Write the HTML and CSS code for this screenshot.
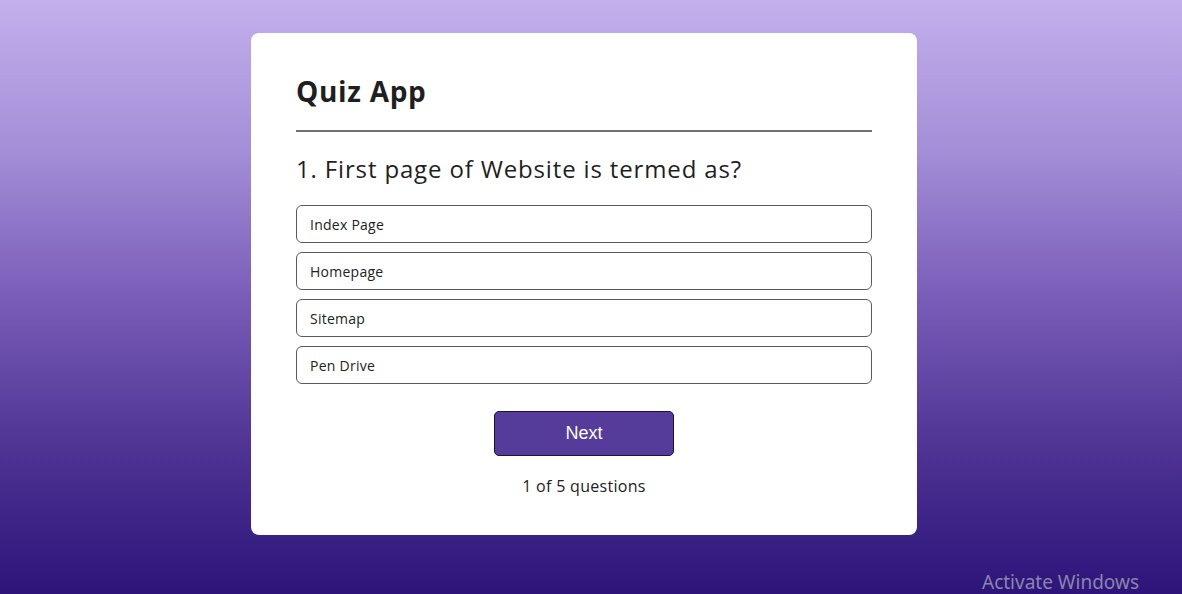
FILE: index.html
```html
<!DOCTYPE html>
<html lang="en">
<head>
<meta charset="utf-8">
<title>Quiz App</title>
<link rel="stylesheet" href="styles.css">
</head>
<body>
<main class="page">
  <section class="card">
    <h1 class="title">Quiz App</h1>
    <hr class="divider">
    <h2 class="question">1. First page of Website is termed as?</h2>
    <ul class="options">
      <li class="option">Index Page</li>
      <li class="option">Homepage</li>
      <li class="option">Sitemap</li>
      <li class="option">Pen Drive</li>
    </ul>
    <div class="actions">
      <button class="next-btn" type="button">Next</button>
      <p class="counter">1 of 5 questions</p>
    </div>
  </section>
</main>
<div class="watermark">Activate Windows</div>
</body>
</html>
```
FILE: styles.css
```css
* { box-sizing: border-box; }
html, body { margin: 0; padding: 0; height: 100%; }
body {
  font-family: "Open Sans", "Noto Sans", sans-serif;
  background: linear-gradient(180deg, #c3b0eb 0%, #a48fd8 25%, #7a5db8 50%, #4f3494 75%, #2c1479 100%);
  min-height: 594px;
  overflow: hidden;
}
.page {
  display: flex;
  justify-content: center;
  padding: 33px 14px 0 0;
}
.card {
  width: 666px;
  height: 502px;
  background: #fff;
  border-radius: 8px;
  padding: 40px 45px 0 45px;
}
.title {
  margin: 0;
  font-size: 28px;
  font-weight: 700;
  color: #1f1f1f;
  line-height: 36px;
  letter-spacing: 0.7px;
}
.divider {
  margin: 21px 0 0 0;
  border: 0;
  height: 2px;
  background: #6f6f6f;
}
.question {
  margin: 20px 0 0 0;
  font-size: 24px;
  font-weight: 400;
  color: #1f1f1f;
  line-height: 34px;
  letter-spacing: 0.85px;
}
.options {
  list-style: none;
  margin: 19px 0 0 0;
  padding: 0;
  display: flex;
  flex-direction: column;
  gap: 9px;
}
.option {
  height: 38px;
  border: 1px solid #5a5a5a;
  border-radius: 6px;
  padding: 0 13px;
  display: flex;
  align-items: center;
  font-size: 14px;
  letter-spacing: 0.25px;
  color: #222;
}
.actions {
  display: flex;
  flex-direction: column;
  align-items: center;
  margin-top: 27px;
}
.next-btn {
  width: 180px;
  height: 45px;
  background: #553c9a;
  border: 1px solid #1d1235;
  border-radius: 5px;
  color: #fff;
  font-family: "Liberation Sans", Arial, sans-serif;
  font-size: 18px;
}
.counter {
  margin: 19px 0 0 0;
  font-size: 16px;
  color: #222;
  line-height: 22px;
  letter-spacing: 0.3px;
}
.watermark {
  position: absolute;
  left: 982px;
  top: 569px;
  font-family: "Noto Sans", "Open Sans", sans-serif;
  font-size: 19px;
  color: #8c84ac;
}
```
